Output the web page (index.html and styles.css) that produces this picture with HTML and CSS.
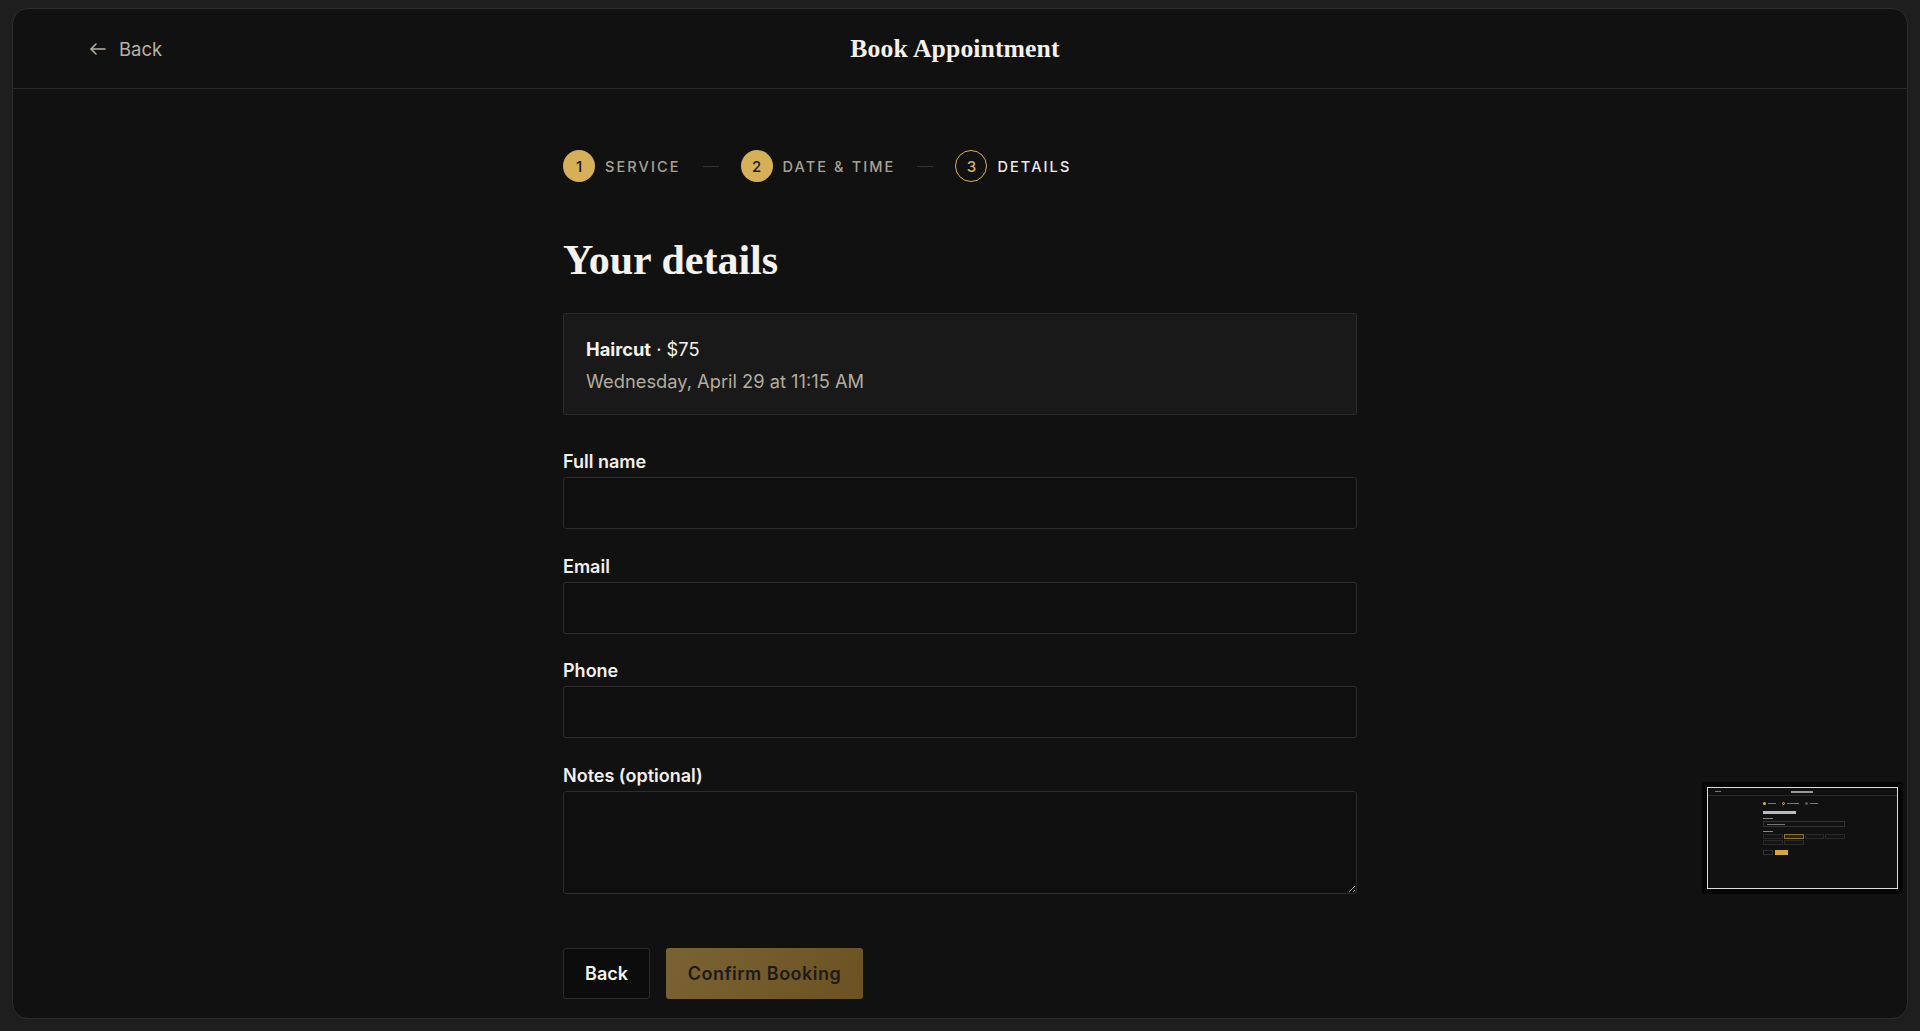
FILE: index.html
```html
<!DOCTYPE html>
<html lang="en">
<head>
<meta charset="utf-8">
<title>Book Appointment</title>
<link rel="stylesheet" href="styles.css">
</head>
<body>
<div class="window">
  <header class="topbar">
    <a class="back-link" href="#">
      <svg class="back-icon" width="16" height="12" viewBox="0 0 16 12" fill="none" stroke="currentColor" stroke-width="1.5" stroke-linecap="round" stroke-linejoin="round"><path d="M15 6H1.2"/><path d="M6 1L1 6l5 5"/></svg>
      <span>Back</span>
    </a>
    <h1 class="title">Book Appointment</h1>
    <div class="spacer"></div>
  </header>

  <main class="content">
    <ol class="steps">
      <li class="step done"><span class="dot">1</span><span class="step-label">Service</span></li>
      <li class="sep"></li>
      <li class="step done"><span class="dot">2</span><span class="step-label">Date &amp; Time</span></li>
      <li class="sep"></li>
      <li class="step current"><span class="dot">3</span><span class="step-label">Details</span></li>
    </ol>

    <h2 class="heading">Your details</h2>

    <div class="summary">
      <div class="summary-service"><strong>Haircut</strong> · $75</div>
      <div class="summary-when">Wednesday, April 29 at 11:15 AM</div>
    </div>

    <form class="form">
      <div class="field">
        <label class="label" for="name">Full name</label>
        <input class="input" id="name" type="text">
      </div>
      <div class="field">
        <label class="label" for="email">Email</label>
        <input class="input" id="email" type="email">
      </div>
      <div class="field">
        <label class="label" for="phone">Phone</label>
        <input class="input" id="phone" type="tel">
      </div>
      <div class="field">
        <label class="label" for="notes">Notes (optional)</label>
        <textarea class="input textarea" id="notes"></textarea>
      </div>
      <div class="actions">
        <button type="button" class="btn btn-back">Back</button>
        <button type="button" class="btn btn-confirm">Confirm Booking</button>
      </div>
    </form>
  </main>
</div>

<div class="minimap">
  <div class="mini-screen">
    <div class="mini-top"><span class="mini-back"></span><span class="mini-title"></span></div>
    <div class="mini-col">
      <div class="mini-steps"><span class="mini-dot gold"></span><span class="mini-txt"></span><span class="mini-dot ring"></span><span class="mini-txt w2"></span><span class="mini-dot"></span><span class="mini-txt"></span></div>
      <div class="mini-heading"></div>
      <div class="mini-label"></div>
      <div class="mini-input"><span class="mini-txt w3"></span></div>
      <div class="mini-label"></div>
      <div class="mini-slots">
        <span class="mini-slot"></span><span class="mini-slot sel"></span><span class="mini-slot"></span><span class="mini-slot"></span>
        <span class="mini-slot"></span><span class="mini-slot"></span>
      </div>
      <div class="mini-actions"><span class="mini-btn"></span><span class="mini-btn gold"></span></div>
    </div>
  </div>
</div>
</body>
</html>
```

FILE: styles.css
```css
* { box-sizing: border-box; }

html, body {
  margin: 0;
  height: 1031px;
  overflow: hidden;
}

body {
  background: #1e1e1e;
  padding: 8px 12px 12px 12px;
  font-family: "Inter", "Liberation Sans", sans-serif;
  color: #f2efea;
}

.window {
  height: 1011px;
  background: #111111;
  border: 1px solid #2c2c2c;
  border-radius: 16px;
  overflow: hidden;
}

.topbar {
  height: 80px;
  border-bottom: 1px solid #2a2a2a;
  display: grid;
  grid-template-columns: 1fr auto 1fr;
  align-items: center;
  padding: 0 87px 0 77px;
}

.back-link {
  display: flex;
  align-items: center;
  gap: 13px;
  color: #b9b1a5;
  text-decoration: none;
  font-size: 18.5px;
  justify-self: start;
}

.back-icon { display: block; }

.title {
  margin: 0;
  font-family: "Liberation Serif", "DejaVu Serif", serif;
  font-weight: 700;
  font-size: 25.7px;
  color: #f4f1ec;
  letter-spacing: 0.1px;
}

.content {
  width: 794px;
  margin: 0 auto;
  padding-top: 61px;
}

.steps {
  list-style: none;
  margin: 0;
  padding: 0;
  display: flex;
  align-items: center;
  gap: 22px;
  height: 32px;
}

.step {
  display: flex;
  align-items: center;
  gap: 10px;
}

.dot {
  width: 32px;
  height: 32px;
  border-radius: 50%;
  display: flex;
  align-items: center;
  justify-content: center;
  font-size: 15px;
  font-weight: 500;
}

.step.done .dot {
  background: #d6b058;
  color: #1b1812;
}

.step.current .dot {
  border: 1.5px solid #d6b058;
  color: #d6b058;
}

.step-label {
  text-transform: uppercase;
  font-size: 14.5px;
  letter-spacing: 2.1px;
  font-weight: 500;
  color: #a9a195;
}

.step.current .step-label { color: #efece7; }

.sep {
  width: 16px;
  height: 1px;
  background: #343434;
}

.heading {
  margin: 53px 0 0;
  font-family: "Liberation Serif", "DejaVu Serif", serif;
  font-weight: 700;
  font-size: 42px;
  line-height: 1.2;
  color: #f6f3ee;
}

.summary {
  margin-top: 28px;
  background: #191919;
  border: 1px solid #2b2b2b;
  border-radius: 2px;
  padding: 21px 22px 19px;
  font-size: 18.3px;
  line-height: 28px;
}

.summary-service { color: #f5f2ed; }
.summary-service strong { font-weight: 700; }

.summary-when {
  margin-top: 4px;
  color: #b4ac9f;
}

.form {
  margin-top: 35px;
  display: flex;
  flex-direction: column;
  gap: 25.5px;
}

.field {
  display: flex;
  flex-direction: column;
  gap: 3px;
}

.label {
  font-size: 18px;
  line-height: 24px;
  font-weight: 600;
  color: #f3f0eb;
}

.input {
  height: 52px;
  width: 100%;
  background: #0f0f0f;
  border: 1px solid #2d2d2d;
  border-radius: 3px;
  color: #f3f0eb;
  font: inherit;
  font-size: 17px;
  padding: 0 16px;
  outline: none;
}

.textarea {
  height: 103px;
  padding: 12px 16px;
  resize: vertical;
}

.actions {
  margin-top: 29px;
  display: flex;
  gap: 16px;
}

.btn {
  height: 51px;
  border-radius: 3px;
  font-family: "Inter", "Liberation Sans", sans-serif;
  font-size: 18px;
  font-weight: 600;
  cursor: pointer;
}

.btn-back {
  width: 87px;
  background: #0c0c0c;
  border: 1px solid #2d2d2d;
  color: #f6f3ee;
}

.btn-confirm {
  width: 197px;
  border: none;
  background: linear-gradient(120deg, #7a6333 0%, #6c5222 100%);
  color: #1d1b16;
  letter-spacing: 0.5px;
}

/* thumbnail preview overlay */
.minimap {
  position: fixed;
  left: 1702px;
  top: 782px;
  width: 201px;
  height: 112px;
  background: #050505;
  border-radius: 4px;
  padding: 5px;
}

.mini-screen {
  width: 100%;
  height: 100%;
  border: 1.5px solid #dcdcdc;
  background: #111;
  overflow: hidden;
}

.mini-top {
  height: 8px;
  border-bottom: 1px solid #2b2b2b;
  display: flex;
  align-items: center;
  padding: 0 7px;
}

.mini-back { width: 6px; height: 1px; background: #777; }
.mini-title { width: 22px; height: 2px; background: #999; margin-left: 70px; }

.mini-col {
  margin-left: 55px;
  width: 82px;
  padding-top: 6px;
}

.mini-steps { display: flex; align-items: center; gap: 2px; height: 3px; }
.mini-dot { width: 3px; height: 3px; border-radius: 50%; background: #555; }
.mini-dot.gold { background: #d6b058; }
.mini-dot.ring { border: 0.5px solid #d6b058; background: transparent; }
.mini-txt { width: 8px; height: 1px; background: #777; margin-right: 4px; }
.mini-txt.w2 { width: 12px; }
.mini-txt.w3 { width: 18px; margin-left: 3px; }

.mini-heading { margin-top: 6px; width: 33px; height: 3px; background: #bbb; }
.mini-label { margin-top: 4px; width: 10px; height: 1px; background: #888; }
.mini-input { margin-top: 2px; height: 6px; border: 0.5px solid #333; display: flex; align-items: center; }

.mini-slots {
  margin-top: 2px;
  display: grid;
  grid-template-columns: repeat(4, 1fr);
  gap: 1px;
}
.mini-slot { height: 5px; border: 0.5px solid #2a2a2a; background: #141414; }
.mini-slot.sel { border-color: #8a7330; background: #2b2414; }

.mini-actions { margin-top: 5px; display: flex; gap: 2px; }
.mini-btn { width: 10px; height: 5px; border: 0.5px solid #333; }
.mini-btn.gold { width: 13px; background: #d6a93a; border-color: #d6a93a; }
```
